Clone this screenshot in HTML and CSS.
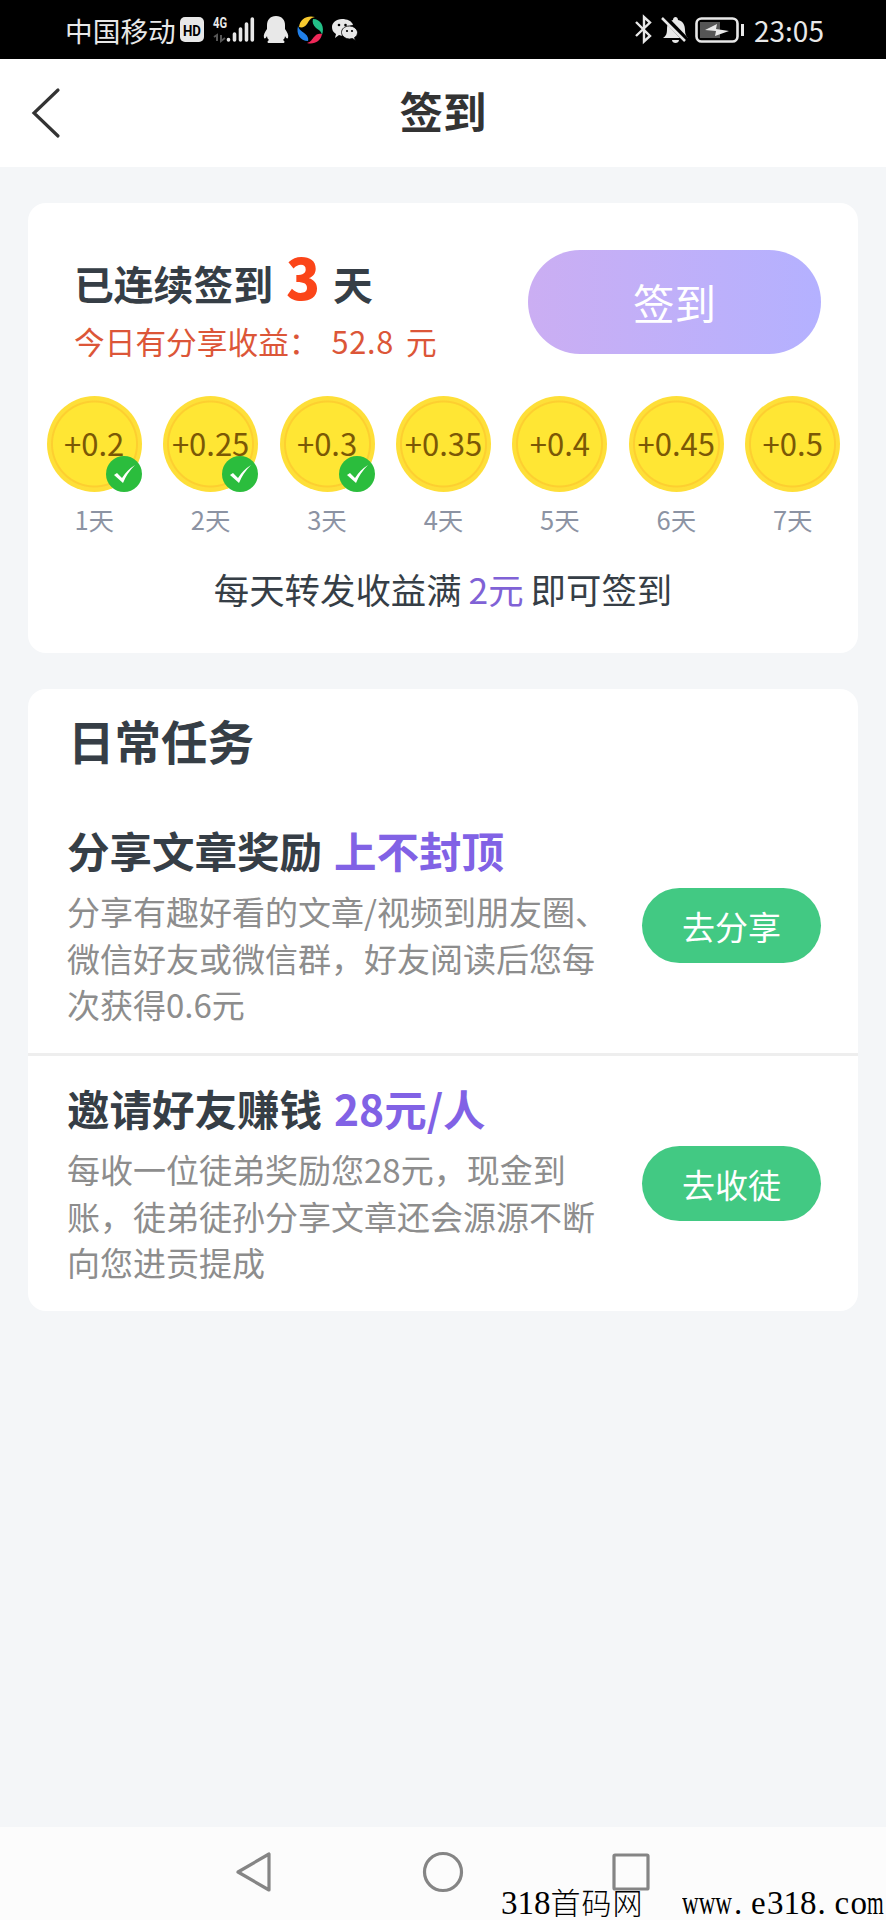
FILE: index.html
```html
<!DOCTYPE html>
<html lang="zh-CN">
<head>
<meta charset="utf-8">
<title>签到</title>
<link rel="stylesheet" href="styles.css">
</head>
<body>
<div class="status">
  <span class="carrier">中国移动</span>
  <svg class="status-left" width="184" height="59" viewBox="0 0 184 59">
    <rect x="0" y="17" width="24" height="25" rx="5" fill="#e8e8e8"/>
    <text x="3" y="36" class="hd" textLength="18" lengthAdjust="spacingAndGlyphs">HD</text>
    <text x="33" y="28" class="net" textLength="14" lengthAdjust="spacingAndGlyphs">4G</text>
    <g stroke="#555" stroke-width="2" fill="none"><path d="M37 41v-6l-3 2M41 35v6l4-3"/></g>
    <g stroke="#e8e8e8" stroke-width="3.6" stroke-linecap="round"><path d="M48.500 39.500v.5M54.500 34v6M60.500 29v11M66.500 24v16M72.300 19v21"/></g>
    <path fill="#e8e8e8" d="M96 16c-6 0-9 4-9 9v4c-2 3-4 6-3 9 1 1 2 0 3-2 0 2 1 3 2 4-2 1-2 3 0 3h14c2 0 2-2 0-3 1-1 2-2 2-4 1 2 2 3 3 2 1-3-1-6-3-9v-4c0-5-3-9-9-9z"/>
    <path fill="#f7c92e" d="M119 27c1-8 8-12 16-10-5 1-6 4-8 7-2 3-5 4-8 3z"/>
    <path fill="#23bf87" d="M133 19c8 0 12 8 9 16-1-4-3-5-6-7-3-3-4-6-3-9z"/>
    <path fill="#ee2858" d="M142 34c-1 7-8 11-15 9 4-1 5-4 7-6 2-3 5-4 8-3z"/>
    <path fill="#207fe8" d="M128 41c-8 0-12-7-10-15 1 4 4 5 6 7 3 2 5 5 4 8z"/>
    <g fill="#e8e8e8" transform="translate(1 0)">
      <path d="M161 19c-6 0-10 4-10 8 0 3 1 5 4 7l-1 4 4-3c2 1 5 1 6 0-1-6 4-10 8-10-1-4-6-6-11-6z"/>
      <path d="M168.500 26c-5 0-8 3-8 6.500s4 6.500 8 6.500l3-.5 3 2-1-3c2-1 3-3 3-5 0-3.500-4-6.500-8-6.500z" stroke="#000" stroke-width=".8"/>
    </g>
    <g fill="#000" transform="translate(1 0)"><circle cx="158" cy="25" r="1.300"/><circle cx="164.500" cy="25" r="1.300"/><circle cx="166" cy="31" r="1.100"/><circle cx="171" cy="31" r="1.100"/></g>
  </svg>
  <svg class="status-right" width="112" height="59" viewBox="0 0 112 59">
    <path d="M2 22l14 14-6 5.500V17l6 5.500L2 36" fill="none" stroke="#e8e8e8" stroke-width="2.400"/>
    <path fill="#e8e8e8" d="M29 38c3-2 4-4 4-9 0-6 2-8 6-9 0-4 5-4 5 0 5 1 7 5 7 10 0 4 1 6 3 8zM38 40h7c0 4-7 4-7 0z"/>
    <path d="M30 17l23 24" stroke="#000" stroke-width="6"/>
    <path d="M28 18l23 23" stroke="#e8e8e8" stroke-width="2.500"/>
    <rect x="62.500" y="18.500" width="41" height="23" rx="5" fill="none" stroke="#e8e8e8" stroke-width="2.600"/>
    <rect x="66" y="22" width="20" height="16" fill="#555"/>
    <path fill="#e8e8e8" d="M71 30l12-6-1 5 13 2-14 5 1-5z"/>
    <path d="M108.500 24v12" stroke="#e8e8e8" stroke-width="3"/>
  </svg>
  <span class="time">23:05</span>
</div>
<header class="header">
  <svg class="back" width="32" height="54" viewBox="0 0 32 54"><path d="M27 4L3 27l24 23" fill="none" stroke="#333" stroke-width="3.200" stroke-linecap="round"/></svg>
  <h1 class="title">签到</h1>
</header>
<main class="main">
  <section class="card checkin">
    <div class="summary">
      <div class="summary-text">
        <div class="streak">已连续签到<b class="streak-count">3</b>天</div>
        <div class="income">今日有分享收益：<span class="amount">52.8</span>元</div>
      </div>
      <button class="sign">签到</button>
    </div>
    <div class="days">
      <div class="day"><div class="coin">+0.2<svg class="check" viewBox="0 0 36 36"><circle cx="18" cy="18" r="18"/><path d="M8 19l3-2 5 5Q21 14 29 9q-8 8-12 18z"/></svg></div>1天</div>
      <div class="day"><div class="coin">+0.25<svg class="check" viewBox="0 0 36 36"><circle cx="18" cy="18" r="18"/><path d="M8 19l3-2 5 5Q21 14 29 9q-8 8-12 18z"/></svg></div>2天</div>
      <div class="day"><div class="coin">+0.3<svg class="check" viewBox="0 0 36 36"><circle cx="18" cy="18" r="18"/><path d="M8 19l3-2 5 5Q21 14 29 9q-8 8-12 18z"/></svg></div>3天</div>
      <div class="day"><div class="coin">+0.35</div>4天</div>
      <div class="day"><div class="coin">+0.4</div>5天</div>
      <div class="day"><div class="coin">+0.45</div>6天</div>
      <div class="day"><div class="coin">+0.5</div>7天</div>
    </div>
    <p class="rule">每天转发收益满<span class="rule-amount">2元</span>即可签到</p>
  </section>
  <section class="card tasks">
    <h2 class="tasks-title">日常任务</h2>
    <div class="task">
      <div class="task-text">
        <h3 class="task-name">分享文章奖励<span class="bonus">上不封顶</span></h3>
        <p class="desc">分享有趣好看的文章/视频到朋友圈、<br>微信好友或微信群，好友阅读后您每<br>次获得0.6元</p>
      </div>
      <button class="go">去分享</button>
    </div>
    <div class="task task-next">
      <div class="task-text">
        <h3 class="task-name">邀请好友赚钱<span class="bonus">28元/人</span></h3>
        <p class="desc">每收一位徒弟奖励您28元，现金到<br>账，徒弟徒孙分享文章还会源源不断<br>向您进贡提成</p>
      </div>
      <button class="go">去收徒</button>
    </div>
  </section>
</main>
<nav class="nav">
  <svg width="44" height="44" viewBox="0 0 44 44"><path d="M36 4v36L5 22z"/></svg>
  <svg width="44" height="44" viewBox="0 0 44 44"><circle cx="22" cy="22" r="18.500"/></svg>
  <svg width="44" height="44" viewBox="0 0 44 44"><rect x="5" y="5" width="34" height="34" rx="1"/></svg>
</nav>
<div class="watermark"><span>318<span class="wm-cn">首码网</span></span><span class="wm-url"><span class="wm-www">www</span><span class="wm-cell">.</span><span class="wm-cell">e</span>318<span class="wm-cell">.</span><span class="wm-cell">c</span>o<span class="wm-m">m</span></span></div>
</body>
</html>
```
FILE: styles.css
```css
* { box-sizing: border-box; }
body {
  margin: 0;
  height: 1920px;
  display: flex;
  flex-direction: column;
  position: relative;
  overflow: hidden;
  background: #f4f6f8;
  color: #363e46;
  font-family: "Noto Sans CJK SC", sans-serif;
}
h1, h2, h3, p { margin: 0; }
button { border: 0; padding: 0; color: #fff; font-family: inherit; }

.status {
  height: 59px;
  flex: none;
  display: flex;
  align-items: center;
  background: #000;
  color: #e8e8e8;
  padding-left: 65px;
  line-height: 56px;
}
.carrier { width: 115px; font-size: 27.700px; white-space: nowrap; }
.status-right { margin-left: 270px; }
.time { margin-left: 8px; font-size: 28px; }
.hd { font: bold 15px Roboto, sans-serif; fill: #000; }
.net { font: bold 14px Roboto, sans-serif; fill: #e8e8e8; }

.header {
  height: 108px;
  flex: none;
  display: grid;
  grid-template-columns: 90px 1fr 90px;
  align-items: center;
  background: #fff;
}
.back { margin-left: 31px; }
.title {
  text-align: center;
  font-size: 43.500px;
  line-height: 60px;
  margin-top: -4px;
  color: #333;
}

.main { flex: 1; padding: 36px 28px 0 28px; }
.card { background: #fff; border-radius: 18px; }
.checkin { height: 450px; padding-top: 47px; }
.summary { display: flex; justify-content: space-between; padding: 0 37px 0 46px; }
.streak {
  display: flex;
  align-items: baseline;
  height: 66px;
  line-height: 52px;
  font-size: 39.800px;
  font-weight: 700;
}
.streak-count { margin: 0 13px 0 13px; font-size: 56px; color: #fb4519; }
.income { font-size: 30.700px; line-height: 50px; color: #dc5638; white-space: nowrap; }
.amount { margin: 0 12px 0 12px; letter-spacing: .7px; }
.sign {
  width: 293px;
  height: 104px;
  border-radius: 52px;
  background: linear-gradient(90deg, #cbaef3, #b4b1ff);
  font-size: 41.500px;
}
.days { display: flex; padding: 0 7px 0 8px; margin-top: 30px; }
.day {
  flex: 1;
  display: flex;
  flex-direction: column;
  align-items: center;
  font-size: 25.500px;
  line-height: 54px;
  color: #8c93a3;
}
.coin {
  position: relative;
  width: 95px;
  height: 96px;
  border-radius: 50%;
  background: radial-gradient(circle, #ffe634 0 41px, #fdcf30 42px 43px, #fedf38 44px);
  color: #7b5806;
  font-size: 31px;
  line-height: 93px;
  text-align: center;
  white-space: nowrap;
}
.check { position: absolute; right: 0; bottom: 0; width: 36px; height: 36px; }
.check circle { fill: #2bbd3d; }
.check path { fill: #fff; }
.rule { margin-top: 17px; text-align: center; font-size: 35.400px; line-height: 52px; }
.rule-amount { margin: 0 7px 0 7px; color: #8062d6; }

.tasks { height: 622px; margin-top: 36px; padding-top: 20px; }
.tasks-title { padding-left: 40px; font-size: 46.500px; line-height: 62px; }
.task { height: 282px; padding: 48px 37px 0 39px; display: flex; justify-content: space-between; }
.task-next { height: 258px; padding-top: 21px; border-top: 3px solid #eee; }
.task-name { font-size: 42.500px; line-height: 62px; white-space: nowrap; }
.bonus { margin-left: 12px; color: #8162e5; }
.desc { margin-top: 7px; font-size: 33px; line-height: 46.700px; color: #8d8d8d; white-space: nowrap; }
.go {
  width: 179px;
  height: 75px;
  margin-top: 69px;
  border-radius: 38px;
  background: #42c983;
  font-size: 33px;
}
.task-next .go { margin-top: 69px; }

.nav {
  height: 93px;
  flex: none;
  display: flex;
  justify-content: center;
  gap: 144px;
  padding-top: 23px;
  background: #fcfcfc;
}
.nav svg { fill: none; stroke: #858585; stroke-width: 3.200; stroke-linejoin: round; }

.watermark {
  position: absolute;
  left: 501px;
  top: 1887px;
  width: 385px;
  display: flex;
  justify-content: space-between;
  font: 33px/33px "Liberation Serif", serif;
  color: #000;
  white-space: nowrap;
}
.wm-cn { display: inline-block; font: 300 30px/33px "Noto Sans CJK SC", sans-serif; letter-spacing: 1px; height: 33px; vertical-align: top; margin-top: -2px; }
.wm-url { width: 204px; }
.wm-www { display: inline-block; width: 51px; transform: scaleX(.7); transform-origin: left; }
.wm-cell { display: inline-block; width: 17px; padding-left: 1px; }
.wm-m { display: inline-block; width: 17px; transform: scaleX(.65); transform-origin: left; }
```
